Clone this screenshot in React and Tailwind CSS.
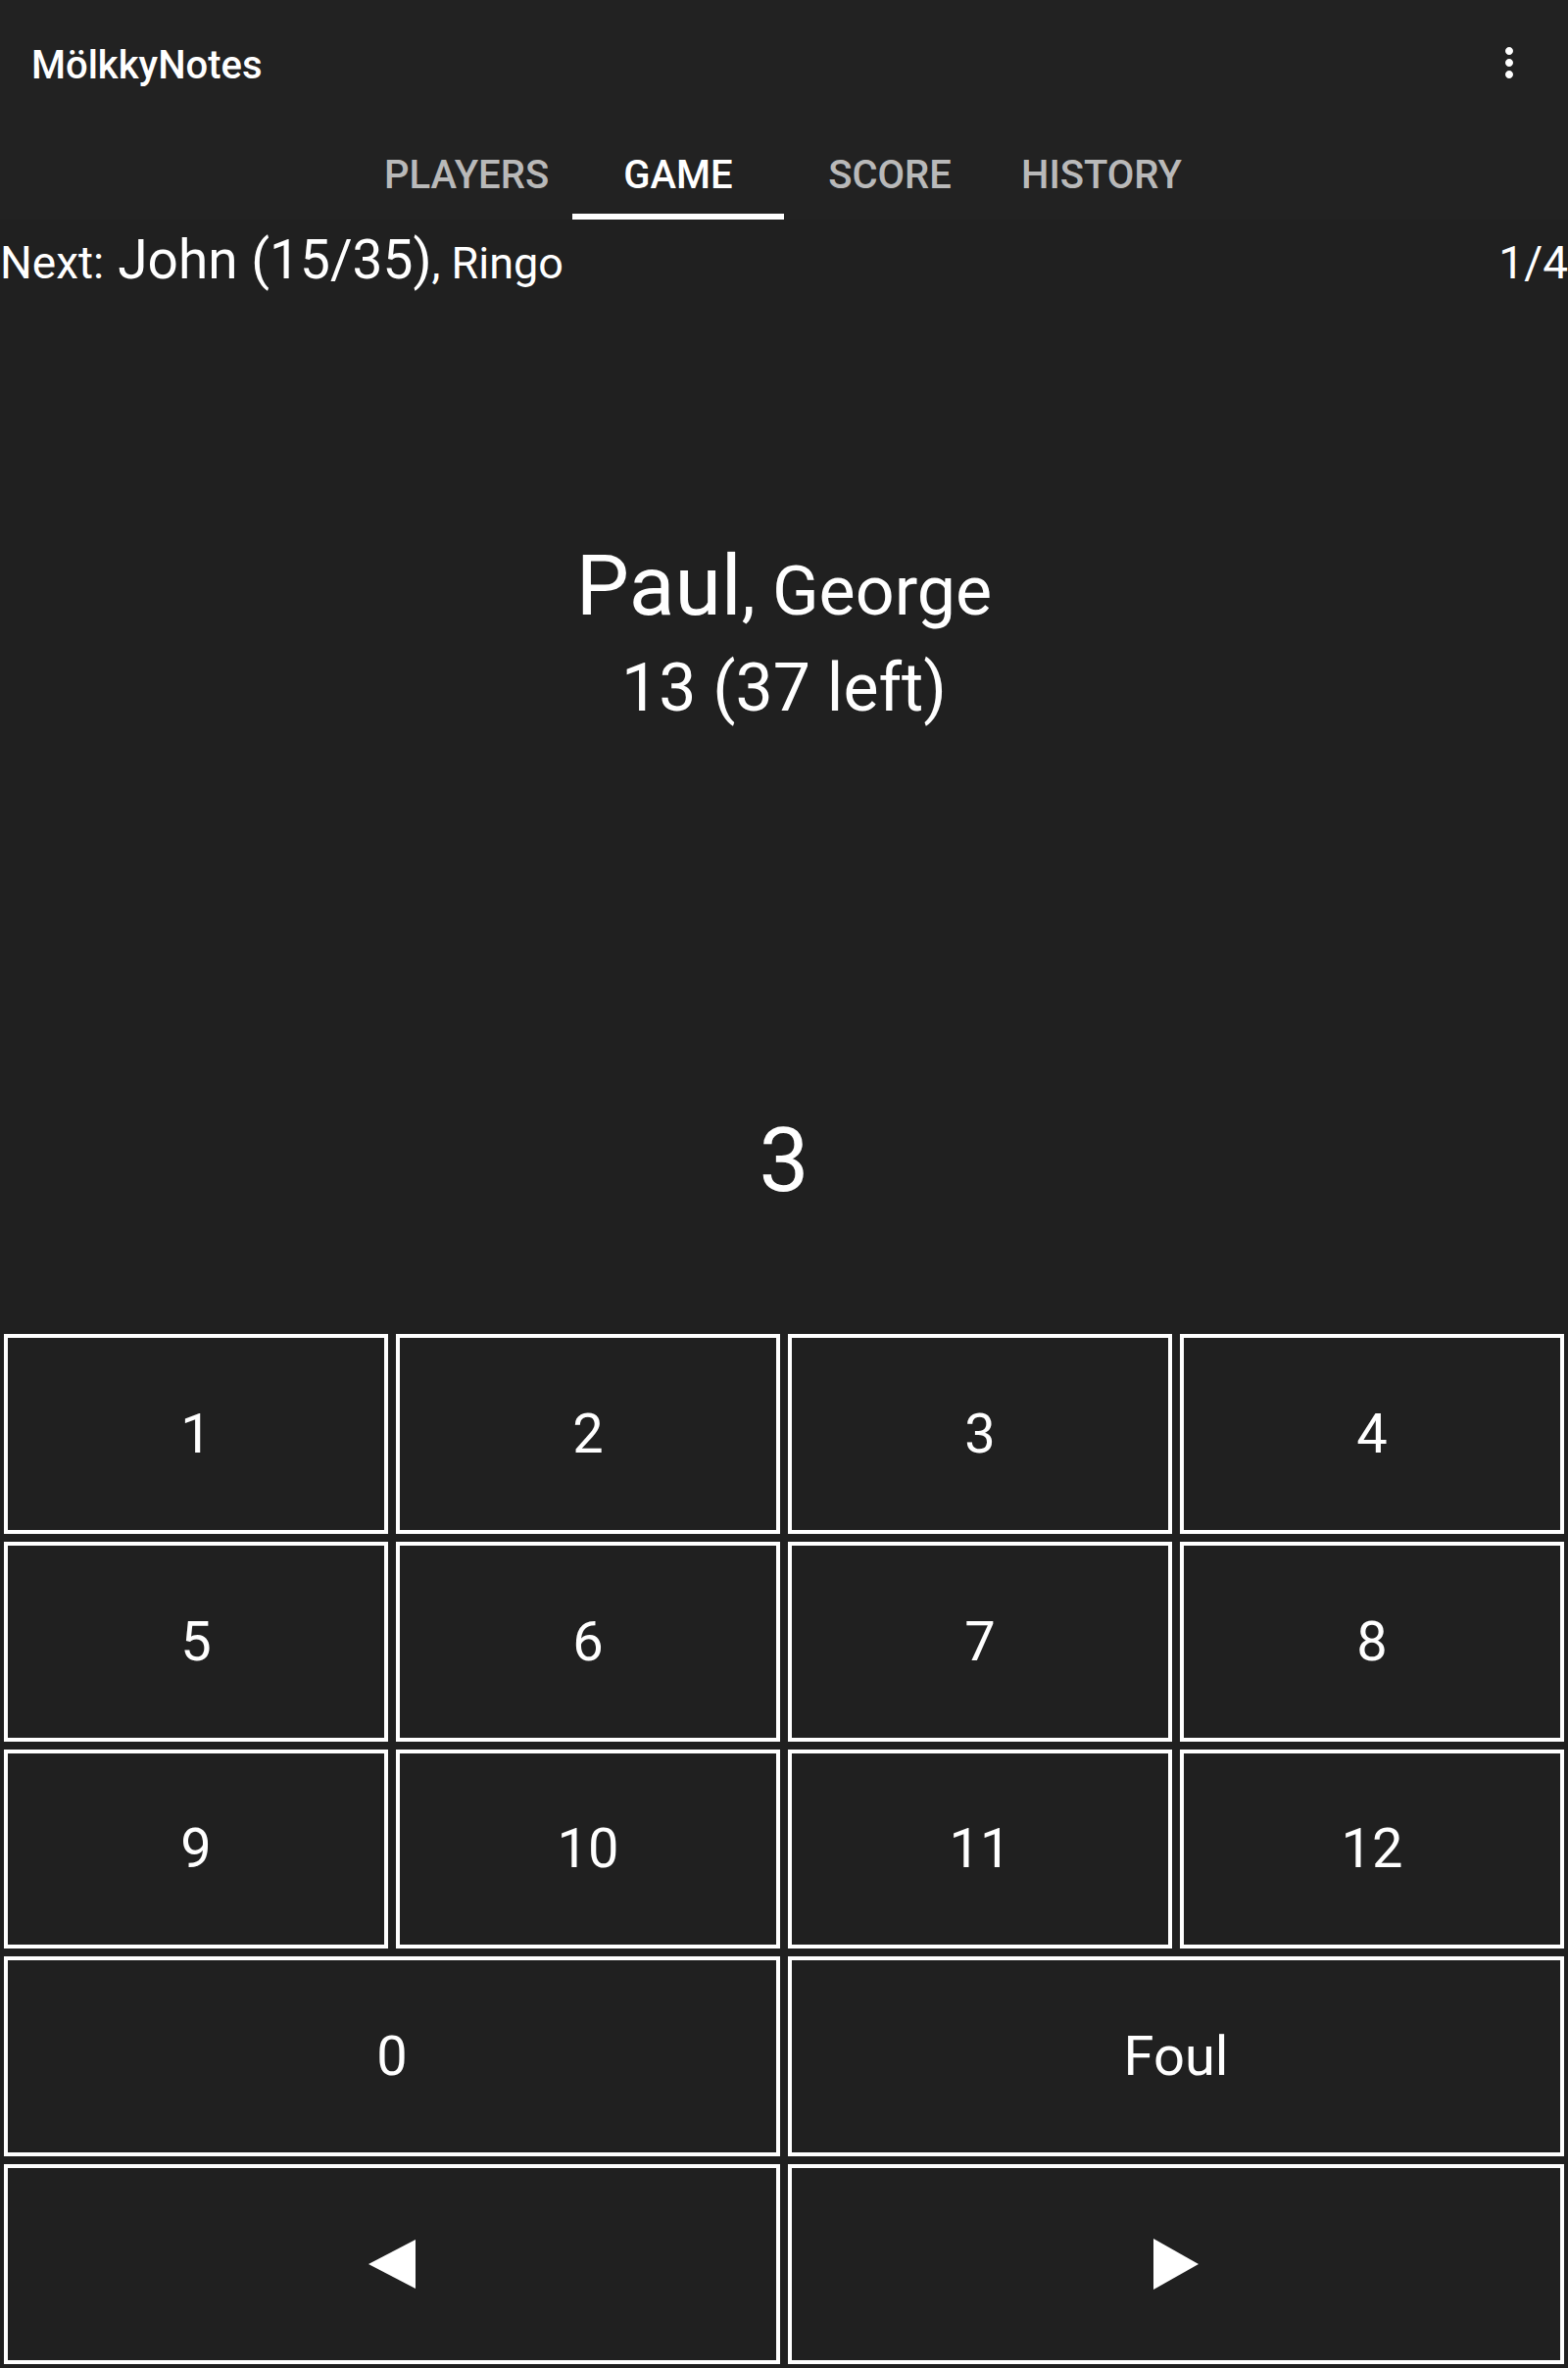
import { MdMoreVert } from "react-icons/md";

const tabs = ["PLAYERS", "GAME", "SCORE", "HISTORY"];
const numbers = [1, 2, 3, 4, 5, 6, 7, 8, 9, 10, 11, 12];

const Cell = ({ children, className = "" }) => (
  <button
    className={`border-4 border-white bg-[#202020] text-white text-[56px] leading-none flex items-center justify-center ${className}`}
  >
    {children}
  </button>
);

const App = () => {
  const active = "GAME";

  return (
    <div
      className="w-[1600px] h-[2416px] bg-[#202020] text-white flex flex-col overflow-hidden"
      style={{ fontFamily: "Roboto, 'Noto Sans', sans-serif" }}
    >
      {/* app bar + tabs */}
      <div className="bg-[#222222]">
        <div className="h-[128px] flex items-center justify-between pl-[32px] pr-[36px]">
          <h1 className="text-[40px] font-medium leading-none pt-[6px]">MölkkyNotes</h1>
          <MdMoreVert className="size-[48px] text-white" />
        </div>
        <div className="h-[96px] flex justify-center">
          {tabs.map((tab) => {
            const isActive = tab === active;
            return (
              <div
                key={tab}
                className={`w-[216px] relative flex items-center justify-center pt-[6px] text-[40px] font-medium leading-none ${
                  isActive ? "text-white" : "text-white/70"
                }`}
              >
                {tab}
                {isActive && (
                  <span className="absolute left-0 right-0 bottom-0 h-[6px] bg-white" />
                )}
              </div>
            );
          })}
        </div>
      </div>

      {/* next players */}
      <div className="flex items-baseline justify-between pt-[14px] leading-none">
        <div className="flex items-baseline">
          <span className="text-[46px]">Next:</span>
          <span className="text-[55px] ml-[14px]">John (15/35)</span>
          <span className="text-[45px] whitespace-pre">, Ringo</span>
        </div>
        <span className="text-[46px]">1/4</span>
      </div>

      {/* current player */}
      <div className="flex flex-col items-center mt-[262px] leading-none">
        <div className="flex items-baseline">
          <span className="text-[86px]">Paul</span>
          <span className="text-[70px]">, George</span>
        </div>
        <div className="text-[68px] mt-[27px]">13 (37 left)</div>
      </div>

      {/* current throw */}
      <div className="text-center text-[91px] leading-none mt-[403px]">3</div>

      {/* keypad */}
      <div className="mt-auto h-[1059px] p-[4px] grid grid-cols-4 grid-rows-5 gap-[8px]">
        {numbers.map((n) => (
          <Cell key={n}>{n}</Cell>
        ))}
        <Cell className="col-span-2">0</Cell>
        <Cell className="col-span-2">Foul</Cell>
        <Cell className="col-span-2">
          <svg width="48" height="50" viewBox="0 0 48 50">
            <polygon points="0,25 48,0 48,50" fill="white" />
          </svg>
        </Cell>
        <Cell className="col-span-2">
          <svg width="46" height="52" viewBox="0 0 46 52">
            <polygon points="0,0 46,26 0,52" fill="white" />
          </svg>
        </Cell>
      </div>
    </div>
  );
};

export default App;
